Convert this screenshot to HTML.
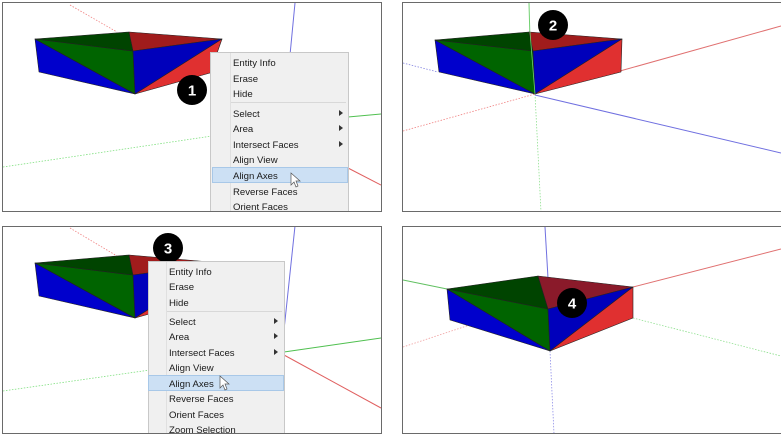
<!DOCTYPE html>
<html><head><meta charset="utf-8"><style>
html,body{margin:0;padding:0;background:#fff;width:781px;height:435px;overflow:hidden}
svg{display:block}
.m{font-family:"Liberation Sans",sans-serif;font-size:9.6px;fill:#1a1a1a}
.b{font-family:"Liberation Sans",sans-serif;font-size:15px;font-weight:bold;fill:#fff}
</style></head><body>
<svg width="781" height="435" viewBox="0 0 781 435" xmlns="http://www.w3.org/2000/svg">
<defs>
<clipPath id="c1"><rect x="3" y="3" width="378" height="208"/></clipPath>
<clipPath id="c2"><rect x="403" y="3" width="378" height="208"/></clipPath>
<clipPath id="c3"><rect x="3" y="227" width="378" height="206"/></clipPath>
<clipPath id="c4"><rect x="403" y="227" width="378" height="206"/></clipPath>
</defs>
<!-- panel frames -->
<rect x="2.5" y="2.5" width="379" height="209" fill="#fff" stroke="#6a6a6a"/>
<rect x="402.5" y="2.5" width="379" height="209" fill="#fff" stroke="#6a6a6a"/>
<rect x="2.5" y="226.5" width="379" height="207" fill="#fff" stroke="#6a6a6a"/>
<rect x="402.5" y="226.5" width="379" height="207" fill="#fff" stroke="#6a6a6a"/>

<!-- PANEL 1 -->
<g clip-path="url(#c1)">
<line x1="70" y1="5" x2="117" y2="32" stroke="#f08080" stroke-width="0.8" stroke-dasharray="1.5 1.5"/>
<line x1="3" y1="167" x2="212" y2="136" stroke="#80e080" stroke-width="0.8" stroke-dasharray="1.5 1.5"/>
<line x1="295" y1="3" x2="290" y2="55" stroke="#7070e0" stroke-width="1"/>
<line x1="348" y1="117" x2="381" y2="114" stroke="#50c050" stroke-width="1"/>
<line x1="348" y1="168" x2="381" y2="185" stroke="#e06060" stroke-width="1"/>
<g stroke="#222" stroke-width="0.6" stroke-linejoin="round">
<polygon points="35,39 39,72 135,94" fill="#0000cc"/>
<polygon points="35,39 135,94 133,51" fill="#006400"/>
<polygon points="35,39 129,32 133,51" fill="#004400"/>
<polygon points="129,32 222,39 133,51" fill="#a01c1c"/>
<polygon points="133,51 222,39 135,94" fill="#0000bb"/>
<polygon points="222,39 210,73 135,94" fill="#e03030"/>
</g>
<circle cx="192" cy="90" r="15" fill="#000"/>
<text class="b" x="192" y="95.5" text-anchor="middle">1</text>
<rect x="210.5" y="52.5" width="138" height="170" fill="#f0f0f0" stroke="#c8c8c8"/>
<line x1="230.5" y1="53" x2="230.5" y2="212" stroke="#e0e0e0"/>
<line x1="231" y1="102.5" x2="346" y2="102.5" stroke="#d8d8d8"/>
<rect x="212.5" y="167.5" width="135" height="15" fill="#cce0f4" stroke="#a8c8e8"/>
<text class="m" x="233" y="66">Entity Info</text>
<text class="m" x="233" y="82">Erase</text>
<text class="m" x="233" y="97">Hide</text>
<text class="m" x="233" y="117">Select</text>
<text class="m" x="233" y="132">Area</text>
<text class="m" x="233" y="148">Intersect Faces</text>
<text class="m" x="233" y="163">Align View</text>
<text class="m" x="233" y="179">Align Axes</text>
<text class="m" x="233" y="195">Reverse Faces</text>
<text class="m" x="233" y="210">Orient Faces</text>
<g fill="#333"><polygon points="339,110 343,113 339,116"/><polygon points="339,125 343,128 339,131"/><polygon points="339,141 343,144 339,147"/></g>
<path d="M291,173 L291,185 L294,182 L296,187 L298,186 L296,181 L300,181 Z" fill="#fff" stroke="#555" stroke-width="0.7"/>
</g>

<!-- PANEL 2 -->
<g clip-path="url(#c2)">
<line x1="403" y1="131" x2="535" y2="94" stroke="#f08080" stroke-width="0.8" stroke-dasharray="1.5 1.5"/>
<line x1="403" y1="63" x2="438" y2="72" stroke="#8080e0" stroke-width="0.8" stroke-dasharray="1.5 1.5"/>
<line x1="535" y1="94" x2="541" y2="212" stroke="#90e090" stroke-width="0.8" stroke-dasharray="1.5 1.5"/>
<line x1="529" y1="3" x2="530" y2="40" stroke="#70d070" stroke-width="1"/>
<line x1="620" y1="71" x2="781" y2="26" stroke="#e07070" stroke-width="1"/>
<line x1="535" y1="95" x2="781" y2="153" stroke="#7070e0" stroke-width="1"/>
<g stroke="#222" stroke-width="0.6" stroke-linejoin="round">
<polygon points="435,40 439,72 535,94" fill="#0000cc"/>
<polygon points="435,40 535,94 533,51" fill="#006400"/>
<polygon points="435,40 529,32 533,51" fill="#004400"/>
<polygon points="529,32 622,39 533,51" fill="#a01c1c"/>
<polygon points="533,51 622,39 535,94" fill="#0000bb"/>
<polygon points="622,39 621,72 535,94" fill="#e03030"/>
</g>
<line x1="530" y1="32" x2="535" y2="94" stroke="#70d070" stroke-width="0.8"/>
<circle cx="553" cy="25" r="15" fill="#000"/>
<text class="b" x="553" y="30.5" text-anchor="middle">2</text>
</g>

<!-- PANEL 3 -->
<g clip-path="url(#c3)">
<line x1="70" y1="228" x2="117" y2="256" stroke="#f08080" stroke-width="0.8" stroke-dasharray="1.5 1.5"/>
<line x1="3" y1="391" x2="150" y2="370" stroke="#80e080" stroke-width="0.8" stroke-dasharray="1.5 1.5"/>
<line x1="295" y1="226" x2="284" y2="330" stroke="#7070e0" stroke-width="1"/>
<line x1="284" y1="352" x2="381" y2="338" stroke="#50c050" stroke-width="1"/>
<line x1="284" y1="355" x2="381" y2="408" stroke="#e06060" stroke-width="1"/>
<g stroke="#222" stroke-width="0.6" stroke-linejoin="round">
<polygon points="35,263 39,296 135,318" fill="#0000cc"/>
<polygon points="35,263 135,318 133,275" fill="#006400"/>
<polygon points="35,263 129,255 133,275" fill="#004400"/>
<polygon points="129,255 222,263 133,275" fill="#a01c1c"/>
<polygon points="133,275 222,263 135,318" fill="#0000bb"/>
<polygon points="222,263 210,297 135,318" fill="#e03030"/>
</g>
<circle cx="168" cy="248" r="15" fill="#000"/>
<text class="b" x="168" y="253.5" text-anchor="middle">3</text>
<rect x="148.5" y="261.5" width="136" height="180" fill="#f0f0f0" stroke="#c8c8c8"/>
<line x1="166.5" y1="262" x2="166.5" y2="434" stroke="#e0e0e0"/>
<line x1="167" y1="311.5" x2="282" y2="311.5" stroke="#d8d8d8"/>
<rect x="148.5" y="375.5" width="135" height="15" fill="#cce0f4" stroke="#a8c8e8"/>
<text class="m" x="169" y="275">Entity Info</text>
<text class="m" x="169" y="290">Erase</text>
<text class="m" x="169" y="306">Hide</text>
<text class="m" x="169" y="325">Select</text>
<text class="m" x="169" y="340">Area</text>
<text class="m" x="169" y="356">Intersect Faces</text>
<text class="m" x="169" y="371">Align View</text>
<text class="m" x="169" y="387">Align Axes</text>
<text class="m" x="169" y="402">Reverse Faces</text>
<text class="m" x="169" y="418">Orient Faces</text>
<text class="m" x="169" y="433">Zoom Selection</text>
<g fill="#333"><polygon points="274,318 278,321 274,324"/><polygon points="274,333 278,336 274,339"/><polygon points="274,349 278,352 274,355"/></g>
<path d="M220,376 L220,388 L223,385 L225,390 L227,389 L225,384 L229,384 Z" fill="#fff" stroke="#555" stroke-width="0.7"/>
</g>

<!-- PANEL 4 -->
<g clip-path="url(#c4)">
<line x1="403" y1="347" x2="512" y2="311" stroke="#f0a0a0" stroke-width="0.8" stroke-dasharray="1.5 1.5"/>
<line x1="633" y1="318" x2="781" y2="356" stroke="#90e090" stroke-width="0.8" stroke-dasharray="1.5 1.5"/>
<line x1="550" y1="351" x2="554" y2="434" stroke="#9090e8" stroke-width="0.8" stroke-dasharray="1.5 1.5"/>
<line x1="545" y1="227" x2="548" y2="278" stroke="#7070e0" stroke-width="1"/>
<line x1="633" y1="287" x2="781" y2="249" stroke="#e07070" stroke-width="1"/>
<line x1="403" y1="280" x2="447" y2="289" stroke="#60c060" stroke-width="1"/>
<g stroke="#222" stroke-width="0.6" stroke-linejoin="round">
<polygon points="447,289 450,320 550,351" fill="#0000cc"/>
<polygon points="447,289 550,351 548,309" fill="#006400"/>
<polygon points="447,289 538,276 548,309" fill="#004400"/>
<polygon points="538,276 633,287 548,309" fill="#8a1a2a"/>
<polygon points="548,309 633,287 550,351" fill="#0000bb"/>
<polygon points="633,287 633,318 550,351" fill="#e03030"/>
</g>
<circle cx="572" cy="303" r="15" fill="#000"/>
<text class="b" x="572" y="308.5" text-anchor="middle">4</text>
</g>
</svg>
</body></html>
